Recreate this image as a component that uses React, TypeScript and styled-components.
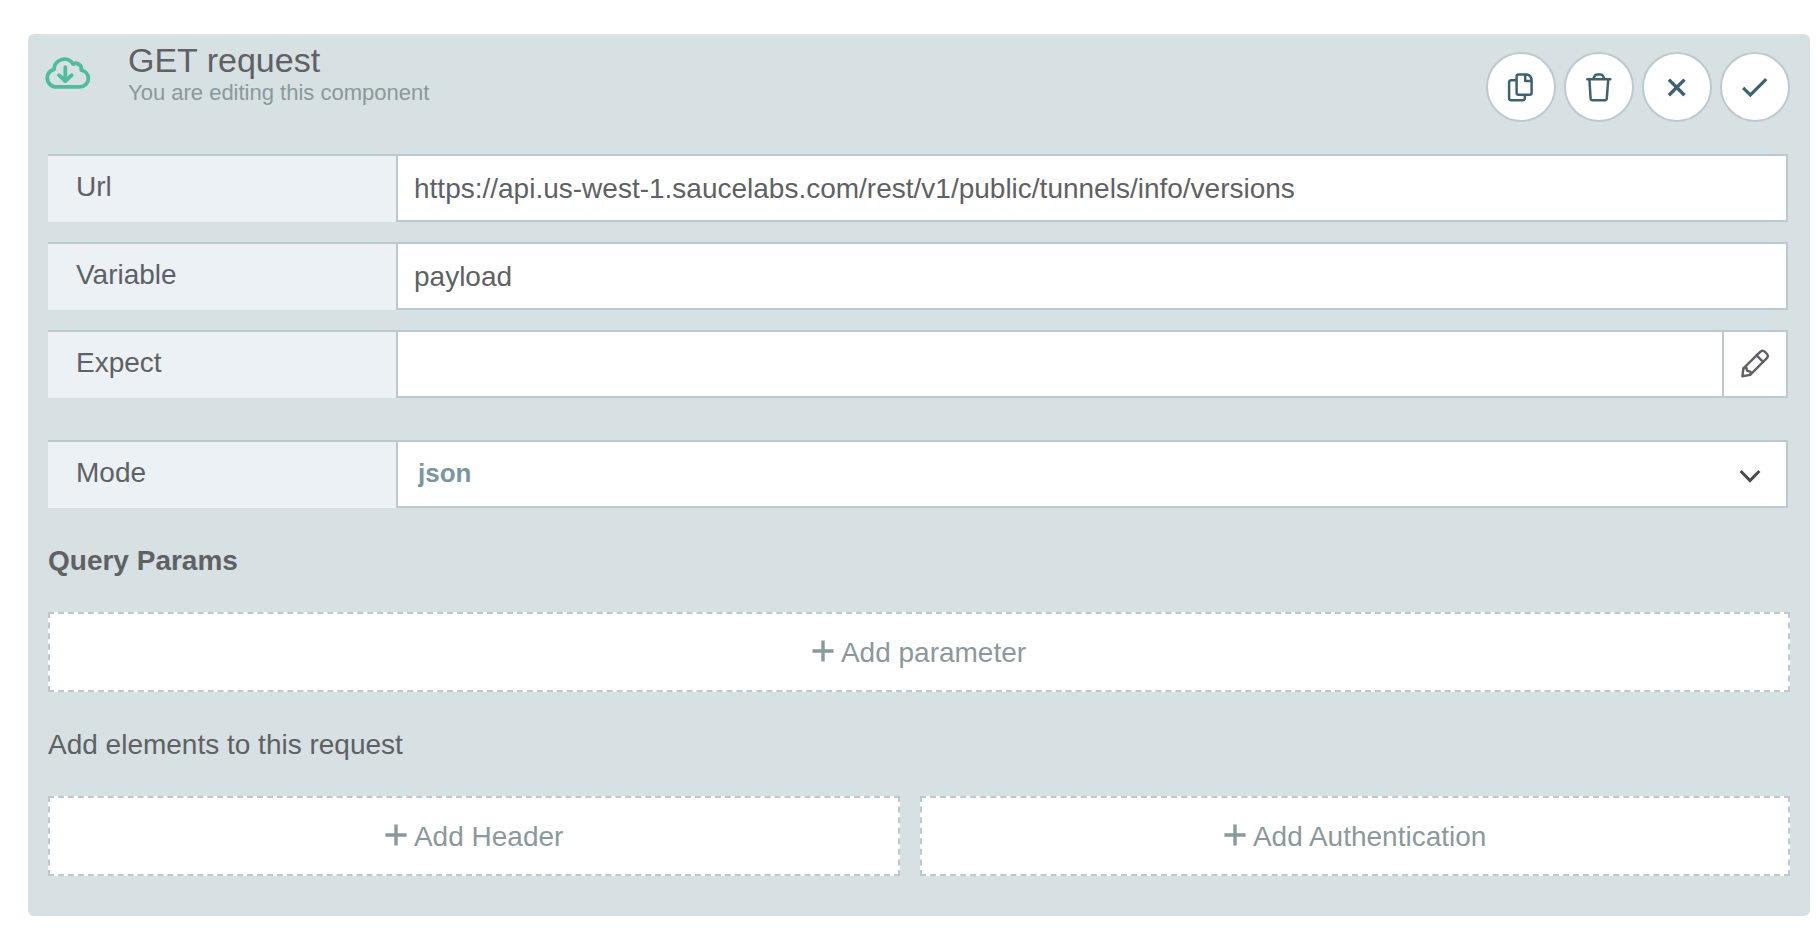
import React, { useState } from "react";
import styled, { createGlobalStyle } from "styled-components";

const color = {
  panel: "#d7e0e2",
  border: "#bccad0",
  label: "#ecf1f5",
  text: "#606164",
  muted: "#8b999c",
  icon: "#3d6270",
  accent: "#4fbc9d",
  value: "#7b96a2",
};

const GlobalStyle = createGlobalStyle`
  * { box-sizing: border-box; }
  body {
    margin: 0;
    background: #fff;
    color: ${color.text};
    font-family: "Liberation Sans", Arial, Helvetica, sans-serif;
    font-size: 28px;
    line-height: 32px;
  }
  input, select, button { font: inherit; color: inherit; border-radius: 0; }
  svg { display: block; flex: none; }
`;

const Panel = styled.form`
  margin: 34px 6px 14px 28px;
  padding: 0 20px 40px;
  border-radius: 6px;
  background: ${color.panel};
`;

const Header = styled.header`
  display: flex;
  align-items: flex-start;
  min-height: 120px;
`;

const TypeIcon = styled.span`
  width: 84px;
  margin-left: -4px;
  padding-top: 21px;
  color: ${color.accent};
`;

const Heading = styled.div`
  flex: 1;
  padding-top: 7px;
`;

const Title = styled.h1`
  margin: 0;
  font-size: 34px;
  line-height: 38px;
  font-weight: 400;
`;

const Subtitle = styled.p`
  margin: 0;
  font-size: 22px;
  line-height: 28px;
  color: ${color.muted};
`;

const Toolbar = styled.div`
  display: flex;
  gap: 8px;
  padding-top: 18px;
`;

const RoundButton = styled.button`
  display: flex;
  align-items: center;
  justify-content: center;
  width: 70px;
  height: 70px;
  padding: 0;
  border: 2px solid ${color.border};
  border-radius: 50%;
  background: #fff;
  color: ${color.icon};
  cursor: pointer;
`;

const Fields = styled.div`
  display: flex;
  flex-direction: column;
  gap: 20px;
  margin-right: 2px;
`;

const Row = styled.div<{ $spaced?: boolean }>`
  display: grid;
  grid-template-columns: 20% 1fr;
  height: 68px;
  margin-top: ${(p) => (p.$spaced ? "22px" : "0")};
`;

const Label = styled.label`
  display: flex;
  align-items: center;
  padding: 0 28px 4px;
  border-top: 2px solid ${color.border};
  background: ${color.label};
`;

const Control = styled.div`
  display: flex;
  position: relative;
  min-width: 0;
  border: 2px solid ${color.border};
  background: #fff;
`;

const TextInput = styled.input`
  flex: 1;
  min-width: 0;
  padding: 2px 16px 0;
  border: 0;
  background: transparent;
`;

const EditButton = styled.button`
  display: flex;
  align-items: center;
  justify-content: center;
  width: 64px;
  padding: 0;
  border: 0;
  border-left: 2px solid ${color.border};
  background: #fff;
  cursor: pointer;
`;

const Select = styled.select`
  flex: 1;
  appearance: none;
  padding: 0 20px 2px;
  border: 0;
  background: transparent;
  color: ${color.value};
  font-size: 26px;
  font-weight: 700;
`;

const Chevron = styled.span`
  position: absolute;
  top: 22px;
  right: 24px;
  color: #4a4b4d;
  pointer-events: none;
`;

const SectionTitle = styled.h2<{ $strong?: boolean }>`
  margin: 0;
  padding: 37px 0 35px;
  font-size: 28px;
  line-height: 32px;
  font-weight: ${(p) => (p.$strong ? 700 : 400)};
`;

const AddButton = styled.button`
  display: flex;
  align-items: center;
  justify-content: center;
  gap: 7px;
  width: 100%;
  height: 80px;
  padding: 2px 0 0;
  border: 2px dashed ${color.border};
  background: #fff;
  color: ${color.muted};
  cursor: pointer;

  svg { margin-bottom: 4px; }
`;

const AddGrid = styled.div`
  display: grid;
  grid-template-columns: 49fr 50fr;
  gap: 20px;
`;

type IconProps = { d: string[]; stroke: number; width?: number; height?: number; round?: boolean };

const Icon = ({ d, stroke, width = 32, height = 32, round = true }: IconProps) => (
  <svg
    width={width}
    height={height}
    viewBox={`0 0 ${width} ${height}`}
    fill="none"
    stroke="currentColor"
    strokeWidth={stroke}
    strokeLinecap={round ? "round" : "butt"}
    strokeLinejoin={round ? "round" : "miter"}
    aria-hidden="true"
  >
    {d.map((path) => (
      <path key={path} d={path} />
    ))}
  </svg>
);

const CloudDownload = () => (
  <Icon
    width={48}
    height={36}
    stroke={3.8}
    d={[
      "M12.5 31.9H36A8.6 8.6 0 0 0 44.4 23.2A8.6 8.6 0 0 0 37.3 15.2A5.6 5.6 0 0 0 29.2 9A10.4 10.4 0 0 0 10 14.4A9.3 9.3 0 0 0 3.2 22.8A9.2 9.2 0 0 0 12.5 31.9Z",
      "M21.3 12.2V25.8M15 20.2L21.3 26L27.7 20.2",
    ]}
  />
);

const Copy = () => (
  <Icon
    stroke={2.5}
    d={[
      "M13.6 3.4H21.6Q26.4 4.2 26.6 9.4V21.8A2 2 0 0 1 24.6 23.8H13.6A2 2 0 0 1 11.6 21.8V5.4A2 2 0 0 1 13.6 3.4Z",
      "M20.2 4V9.9H26.2",
      "M10.6 9.3H6A1.9 1.9 0 0 0 4.1 11.2V27.3A1.9 1.9 0 0 0 6 29.2H18A1.9 1.9 0 0 0 19.9 27.3V24.6",
    ]}
  />
);

const Trash = () => (
  <Icon
    stroke={2.5}
    d={[
      "M4.4 8.2H27.2",
      "M10.2 7.8L11.6 5.2Q12.3 3.6 14 3.6H17.8Q19.4 3.6 20.1 5.2L21.4 7.8",
      "M6.4 8.6L7.6 27.4Q7.8 29.3 9.6 29.3H21.8Q23.6 29.3 23.8 27.4L25.2 8.6",
    ]}
  />
);

const Close = () => <Icon stroke={3.4} round={false} d={["M7.9 8.6L23.5 24.2M23.5 8.6L7.9 24.2"]} />;

const Check = () => <Icon stroke={3.2} round={false} d={["M4.1 16.9L11.4 24L27.2 8.1"]} />;

const Pencil = () => (
  <Icon
    stroke={2.4}
    d={[
      "M3.4 28.2L4.4 20.3L21.2 3.8Q23.5 1.5 26 3.9L27.6 5.5Q30 8 27.6 10.4L11.2 26.9Z",
      "M17.6 7.3L24.1 13.8",
      "M4.6 20.3L7.4 19.6L8.2 22.8L11.6 23.6L11.4 26.4",
    ]}
  />
);

const ChevronDown = () => (
  <Icon width={24} height={24} stroke={3} round={false} d={["M2.6 7L12 16.6L21.4 7"]} />
);

const Plus = () => <Icon width={22} height={22} stroke={3.4} round={false} d={["M11 0.4V21.6M0.4 11H21.6"]} />;

export default function App() {
  const [url, setUrl] = useState("https://api.us-west-1.saucelabs.com/rest/v1/public/tunnels/info/versions");
  const [variable, setVariable] = useState("payload");
  const [expect, setExpect] = useState("");
  const [mode, setMode] = useState("json");

  return (
    <>
      <GlobalStyle />
      <Panel onSubmit={(e) => e.preventDefault()}>
        <Header>
          <TypeIcon>
            <CloudDownload />
          </TypeIcon>
          <Heading>
            <Title>GET request</Title>
            <Subtitle>You are editing this component</Subtitle>
          </Heading>
          <Toolbar>
            <RoundButton type="button" aria-label="Duplicate">
              <Copy />
            </RoundButton>
            <RoundButton type="button" aria-label="Delete">
              <Trash />
            </RoundButton>
            <RoundButton type="button" aria-label="Cancel">
              <Close />
            </RoundButton>
            <RoundButton type="submit" aria-label="Confirm">
              <Check />
            </RoundButton>
          </Toolbar>
        </Header>

        <Fields>
          <Row>
            <Label htmlFor="url">Url</Label>
            <Control>
              <TextInput id="url" value={url} onChange={(e) => setUrl(e.target.value)} />
            </Control>
          </Row>
          <Row>
            <Label htmlFor="variable">Variable</Label>
            <Control>
              <TextInput id="variable" value={variable} onChange={(e) => setVariable(e.target.value)} />
            </Control>
          </Row>
          <Row>
            <Label htmlFor="expect">Expect</Label>
            <Control>
              <TextInput id="expect" value={expect} onChange={(e) => setExpect(e.target.value)} />
              <EditButton type="button" aria-label="Edit expression">
                <Pencil />
              </EditButton>
            </Control>
          </Row>
          <Row $spaced>
            <Label htmlFor="mode">Mode</Label>
            <Control>
              <Select id="mode" value={mode} onChange={(e) => setMode(e.target.value)}>
                <option value="json">json</option>
              </Select>
              <Chevron>
                <ChevronDown />
              </Chevron>
            </Control>
          </Row>
        </Fields>

        <SectionTitle $strong>Query Params</SectionTitle>
        <AddButton type="button">
          <Plus />
          Add parameter
        </AddButton>

        <SectionTitle>Add elements to this request</SectionTitle>
        <AddGrid>
          <AddButton type="button">
            <Plus />
            Add Header
          </AddButton>
          <AddButton type="button">
            <Plus />
            Add Authentication
          </AddButton>
        </AddGrid>
      </Panel>
    </>
  );
}
